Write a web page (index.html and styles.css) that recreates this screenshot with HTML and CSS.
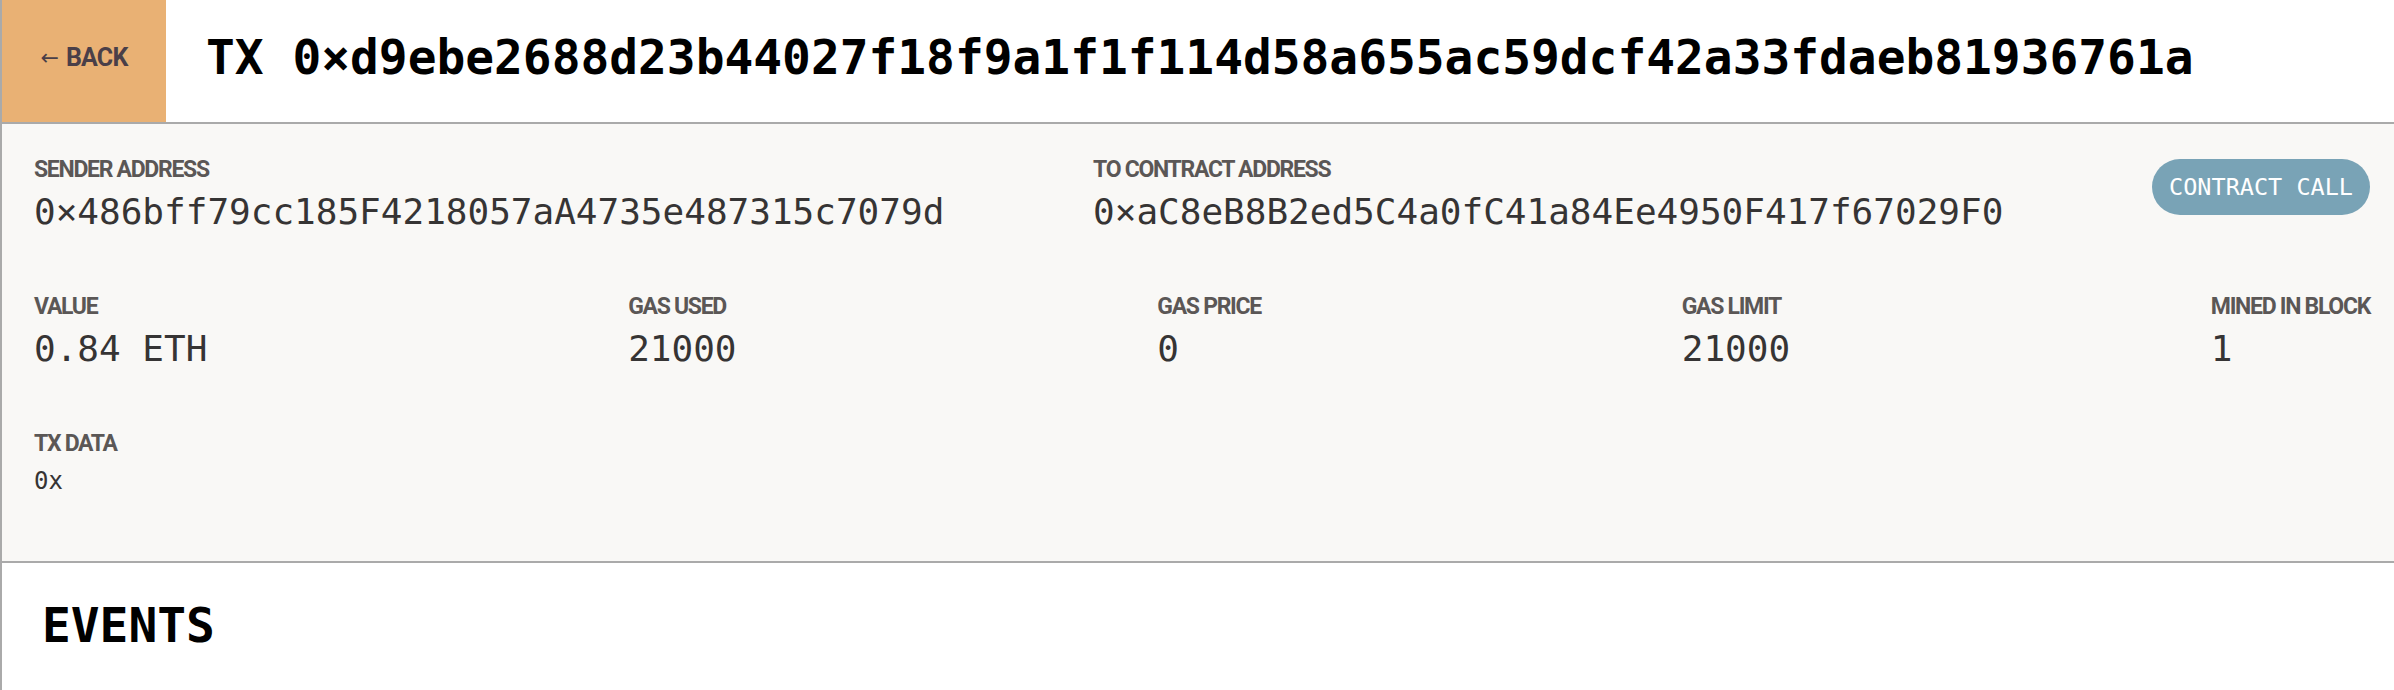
FILE: index.html
```html
<!DOCTYPE html>
<html lang="en">
<head>
<meta charset="utf-8">
<title>Transaction</title>
<link rel="stylesheet" href="styles.css">
</head>
<body>
<div class="page">
  <header class="header">
    <a class="back" href="#"><span class="arrow">←</span>BACK</a>
    <h1 class="title">TX 0×d9ebe2688d23b44027f18f9a1f1f114d58a655ac59dcf42a33fdaeb81936761a</h1>
  </header>
  <section class="details">
    <div class="row">
      <div class="field">
        <div class="label">SENDER ADDRESS</div>
        <div class="value">0×486bff79cc185F4218057aA4735e487315c7079d</div>
      </div>
      <div class="field">
        <div class="label">TO CONTRACT ADDRESS</div>
        <div class="value">0×aC8eB8B2ed5C4a0fC41a84Ee4950F417f67029F0</div>
      </div>
      <div class="pill">CONTRACT CALL</div>
    </div>
    <div class="row">
      <div class="field">
        <div class="label">VALUE</div>
        <div class="value">0.84 ETH</div>
      </div>
      <div class="field">
        <div class="label">GAS USED</div>
        <div class="value">21000</div>
      </div>
      <div class="field">
        <div class="label">GAS PRICE</div>
        <div class="value">0</div>
      </div>
      <div class="field">
        <div class="label">GAS LIMIT</div>
        <div class="value">21000</div>
      </div>
      <div class="field">
        <div class="label">MINED IN BLOCK</div>
        <div class="value">1</div>
      </div>
    </div>
    <div class="row">
      <div class="field">
        <div class="label">TX DATA</div>
        <div class="value value-sm">0x</div>
      </div>
    </div>
  </section>
  <section class="events">
    <h2 class="events-title">EVENTS</h2>
  </section>
</div>
</body>
</html>
```
FILE: styles.css
```css
html, body {
  margin: 0;
  padding: 0;
  background: #ffffff;
}
body {
  font-family: "DejaVu Sans Mono", monospace;
}
.page {
  border-left: 2px solid #aaaaaa;
  min-height: 690px;
  box-sizing: border-box;
}
.header {
  display: flex;
  height: 122px;
  border-bottom: 2px solid #aaaaaa;
}
.back {
  width: 164px;
  flex: none;
  background: #e9b174;
  color: #4a3f48;
  text-decoration: none;
  font-family: Roboto, "Liberation Sans", sans-serif;
  font-weight: 700;
  font-size: 25px;
  letter-spacing: -0.8px;
  display: flex;
  align-items: center;
  justify-content: center;
  padding-bottom: 7px;
  box-sizing: border-box;
}
.arrow {
  font-family: "DejaVu Sans", sans-serif;
  font-weight: 400;
  font-size: 22px;
  margin-right: 7px;
  letter-spacing: 0;
}
.title {
  margin: 0 0 7px 40px;
  align-self: center;
  font-family: "DejaVu Sans Mono", monospace;
  font-weight: 700;
  font-size: 47.85px;
  line-height: 56px;
  color: #000000;
  white-space: nowrap;
}
.details {
  background: #f9f8f6;
  padding: 33px 24px 66px 32px;
  border-bottom: 2px solid #aaaaaa;
  display: flex;
  flex-direction: column;
  gap: 61px;
}
.row {
  display: flex;
  justify-content: space-between;
  align-items: flex-start;
}
.label {
  font-family: Roboto, "Liberation Sans", sans-serif;
  font-weight: 700;
  font-size: 23px;
  line-height: 26px;
  letter-spacing: -1.3px;
  color: #5b5756;
}
.value {
  margin-top: 8px;
  font-family: "DejaVu Sans Mono", monospace;
  font-size: 36px;
  line-height: 42px;
  color: #363434;
  white-space: nowrap;
}
.value-sm {
  margin-top: 10px;
  font-size: 24px;
  line-height: 28px;
}
.pill {
  margin-top: 2px;
  height: 56px;
  padding: 0 17px;
  border-radius: 28px;
  background: #79a3b6;
  color: #ffffff;
  font-family: "DejaVu Sans Mono", monospace;
  font-size: 23.5px;
  display: flex;
  align-items: center;
}
.events {
  padding: 35px 40px;
}
.events-title {
  margin: 0;
  font-family: "DejaVu Sans Mono", monospace;
  font-weight: 700;
  font-size: 47.85px;
  line-height: 56px;
  color: #000000;
}
```
